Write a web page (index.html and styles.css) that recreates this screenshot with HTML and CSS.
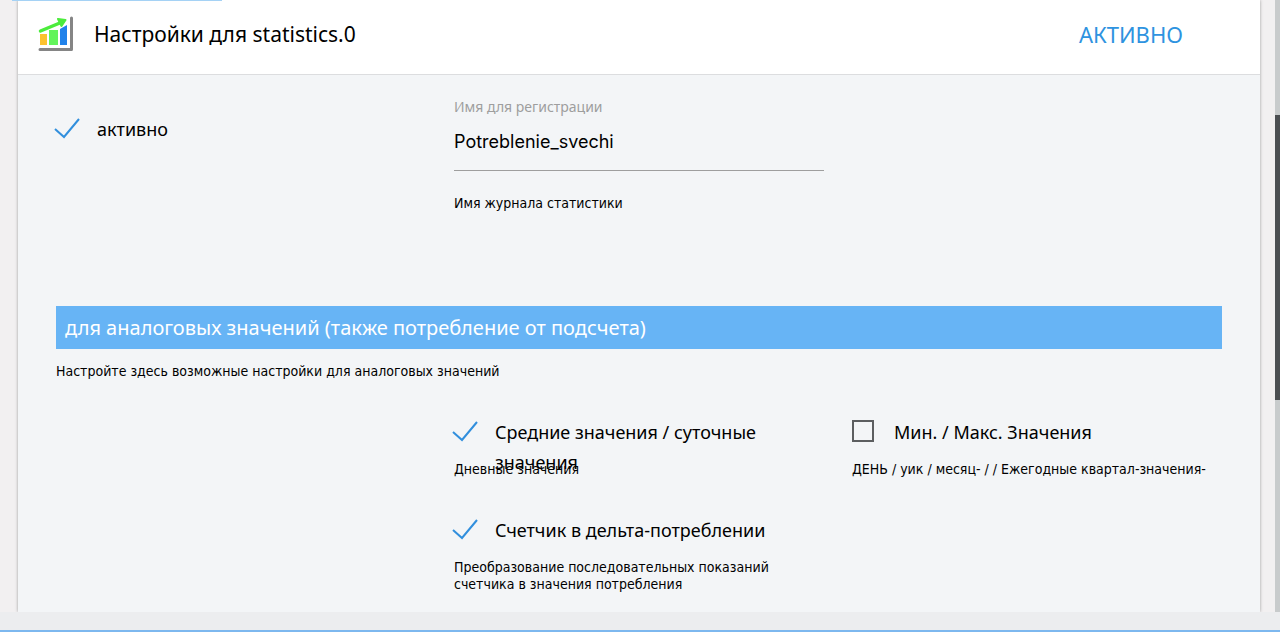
FILE: index.html
```html
<!DOCTYPE html>
<html lang="ru">
<head>
<meta charset="UTF-8">
<meta name="viewport" content="width=device-width, initial-scale=1.0">
<title>Настройки для statistics.0</title>
<link rel="stylesheet" href="styles.css">
</head>
<body>

<div class="progress"></div>

<div class="page">
  <div class="modal">
    <header class="modal-header">
      <svg class="logo" viewBox="0 0 36 36" aria-hidden="true">
        <path d="M33.500 2V33.500H2" fill="none" stroke="#858585" stroke-width="3" stroke-linecap="round" stroke-linejoin="round"/>
        <rect x="2" y="18" width="7" height="11" fill="#fcc22f"/>
        <rect x="11" y="14" width="9" height="15" fill="#62f45a"/>
        <path d="M22 13L29 9V29H22Z" fill="#2082ea"/>
        <path d="M2.500 15L23 6.500" fill="none" stroke="#4cec3c" stroke-width="3.500" stroke-linecap="round"/>
        <path d="M20 3L27.500 4L23.500 10Z" fill="#4cec3c" stroke="#4cec3c" stroke-width="2" stroke-linejoin="round"/>
      </svg>
      <h1>Настройки для statistics.0</h1>
      <button type="button" class="btn-active">АКТИВНО</button>
    </header>

    <form class="modal-body">
      <div class="row row-main">
        <div class="field field-enabled">
          <label class="check"><input type="checkbox" checked><span>активно</span></label>
        </div>
        <div class="field">
          <label class="caption" for="logName">Имя для регистрации</label>
          <input type="text" class="text-input" id="logName" value="Potreblenie_svechi">
          <p class="help">Имя журнала статистики</p>
        </div>
      </div>

      <h2>для аналоговых значений (также потребление от подсчета)</h2>
      <p class="help intro">Настройте здесь возможные настройки для аналоговых значений</p>

      <div class="row">
        <div class="field col-2">
          <label class="check"><input type="checkbox" checked><span>Средние значения / суточные значения</span></label>
          <p class="help">Дневные значения</p>
        </div>
        <div class="field">
          <label class="check"><input type="checkbox"><span>Мин. / Макс. Значения</span></label>
          <p class="help">ДЕНЬ / уик / месяц- / / Ежегодные квартал-значения-</p>
        </div>
        <div class="field col-2">
          <label class="check"><input type="checkbox" checked><span>Счетчик в дельта-потреблении</span></label>
          <p class="help">Преобразование последовательных показаний счетчика в значения потребления</p>
        </div>
      </div>
    </form>
  </div>

  <div class="scrollbar"><div class="thumb"></div></div>
</div>

<footer class="bottom-bar"></footer>

</body>
</html>
```
FILE: styles.css
```css
* {
  box-sizing: border-box;
}
body {
  display: flex;
  flex-direction: column;
  height: 100vh;
  margin: 0;
  overflow: hidden;
  background-color: #f2f0f1;
  font-family: "Noto Sans", sans-serif;
  color: #000;
}
.progress {
  position: absolute;
  top: 0;
  left: 12px;
  width: 210px;
  height: 1px;
  background-color: #a5d2f5;
}
.page {
  display: flex;
  flex: 1;
  min-height: 0;
}
.modal {
  flex: 1;
  margin: 0 15px 0 18px;
  background-color: #f3f5f7;
  box-shadow: 0 0 3px rgba(0, 0, 0, 0.35);
}
.modal-header {
  display: flex;
  align-items: center;
  height: 75px;
  padding: 0 77px 6px 20px;
  border-bottom: 1px solid #dcdddf;
  background-color: #fff;
}
.logo {
  width: 36px;
  height: 36px;
}
h1 {
  flex: 1;
  margin: 0 0 0 20px;
  font-size: 21px;
  font-weight: normal;
  line-height: 30px;
}
.btn-active {
  padding: 0;
  border: none;
  background: none;
  font-family: inherit;
  font-size: 22px;
  line-height: 30px;
  color: #2e93e0;
  cursor: pointer;
}
.modal-body {
  padding: 23px 38px 0;
}
.row {
  display: grid;
  grid-template-columns: repeat(3, 1fr);
  gap: 37px 28px;
}
.row-main {
  min-height: 208px;
}
.field-enabled {
  padding-top: 16px;
}
.col-2 {
  grid-column: 2;
}
/* long labels run over the help text below */
.check {
  display: flex;
  gap: 20px;
  height: 44px;
  font-size: 18px;
  line-height: 30px;
}
.check input {
  flex: none;
  appearance: none;
  width: 22px;
  height: 22px;
  margin: 3px 0 0;
  border: 2px solid #5c5e60;
}
.check input:checked {
  width: 26px;
  margin: 3px -3px 0 -2px;
  border: none;
  background: url('data:image/svg+xml,<svg xmlns="http://www.w3.org/2000/svg" viewBox="0 0 26 22"><path d="M1 12L10 20L25 2" fill="none" stroke="%23318fdd" stroke-width="2"/></svg>') no-repeat;
}
.caption {
  display: block;
  font-size: 14px;
  line-height: 18px;
  color: #9e9e9e;
}
.text-input {
  display: block;
  width: 100%;
  height: 55px;
  margin-bottom: 24px;
  padding: 0 0 3px;
  border: none;
  border-bottom: 1px solid #9e9e9e;
  background: none;
  font-family: Inter, sans-serif;
  font-size: 18px;
  color: #000;
}
.help {
  margin: 0;
  font-family: "DejaVu Sans Condensed", "DejaVu Sans", sans-serif;
  font-stretch: condensed;
  font-size: 14px;
  line-height: 17px;
}
h2 {
  margin: 0;
  padding: 6px 9px;
  background-color: #67b4f5;
  font-size: 20px;
  font-weight: normal;
  line-height: 31px;
  color: #fff;
}
.intro {
  margin: 14px 0 37px;
}
.scrollbar {
  display: flex;
  flex-direction: column;
  width: 5px;
  background-color: #c8cbcc;
}
.thumb {
  height: 285px;
  margin-top: 115px;
  background-color: #4c4f52;
}
.bottom-bar {
  height: 20px;
  border-bottom: 2px solid #7db8ef;
  background-color: #ecedef;
}
```
